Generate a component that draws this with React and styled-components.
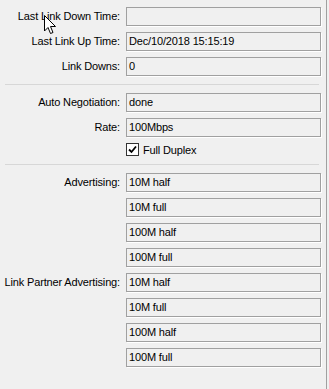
import React from "react";
import styled, { createGlobalStyle } from "styled-components";

const Global = createGlobalStyle`
  html, body { margin: 0; padding: 0; background: #f0f0f0; }
  body { font-family: "Liberation Sans", Arial, sans-serif; font-size: 11px; letter-spacing: -0.15px; color: #000; }
`;

const Window = styled.div`
  position: relative;
  width: 327px;
  height: 389px;
  box-sizing: border-box;
  border-right: 1px solid #a0a0a0;
  padding-top: 7px;
`;

const Section = styled.div`
  display: grid;
  grid-template-columns: 120px 195px;
  column-gap: 6px;
  row-gap: 6px;
  align-items: center;
`;

const Separator = styled.div`
  height: 0;
  border-top: 1px solid #d7d7d7;
  margin: 8px 7px 8px 5px;
`;

const Label = styled.div`
  text-align: right;
  white-space: nowrap;
  line-height: 19px;
`;

const Field = styled.div`
  box-sizing: border-box;
  height: 19px;
  border: 1px solid #a0a0a0;
  box-shadow: 1px 1px 0 #ffffff;
  padding: 0 2px;
  line-height: 17px;
  white-space: nowrap;
`;

const CheckRow = styled.label`
  display: flex;
  align-items: center;
  gap: 4px;
  height: 13px;
`;

const Box = styled.span`
  box-sizing: border-box;
  width: 13px;
  height: 13px;
  border: 1px solid #333;
  background: #fff;
  display: flex;
  align-items: center;
  justify-content: center;
`;

const Cursor = styled.svg`
  position: absolute;
  left: 44px;
  top: 15px;
`;

const Row = ({ label, value }) => (
  <>
    <Label>{label}</Label>
    <Field>{value}</Field>
  </>
);

export default function App() {
  return (
    <>
      <Global />
      <Window>
        <Section>
          <Row label="Last Link Down Time:" value="" />
          <Row label="Last Link Up Time:" value="Dec/10/2018 15:15:19" />
          <Row label="Link Downs:" value="0" />
        </Section>
        <Separator />
        <Section>
          <Row label="Auto Negotiation:" value="done" />
          <Row label="Rate:" value="100Mbps" />
          <span />
          <CheckRow>
            <Box>
              <svg width="9" height="9" viewBox="0 0 9 9">
                <path d="M1 4.5 L3.5 7 L8 1.5" stroke="#000" strokeWidth="1.8" fill="none" />
              </svg>
            </Box>
            Full Duplex
          </CheckRow>
        </Section>
        <Separator />
        <Section>
          <Row label="Advertising:" value="10M half" />
          <Row label="" value="10M full" />
          <Row label="" value="100M half" />
          <Row label="" value="100M full" />
          <Row label="Link Partner Advertising:" value="10M half" />
          <Row label="" value="10M full" />
          <Row label="" value="100M half" />
          <Row label="" value="100M full" />
        </Section>
        <Cursor width="13" height="20" viewBox="0 0 13 20">
          <path d="M0.5 0.5 L0.5 16 L4 12.5 L6.5 18.5 L9 17.5 L6.5 11.5 L11.5 11.5 Z" fill="#fff" stroke="#000" strokeWidth="1" strokeLinejoin="miter" />
        </Cursor>
      </Window>
    </>
  );
}
